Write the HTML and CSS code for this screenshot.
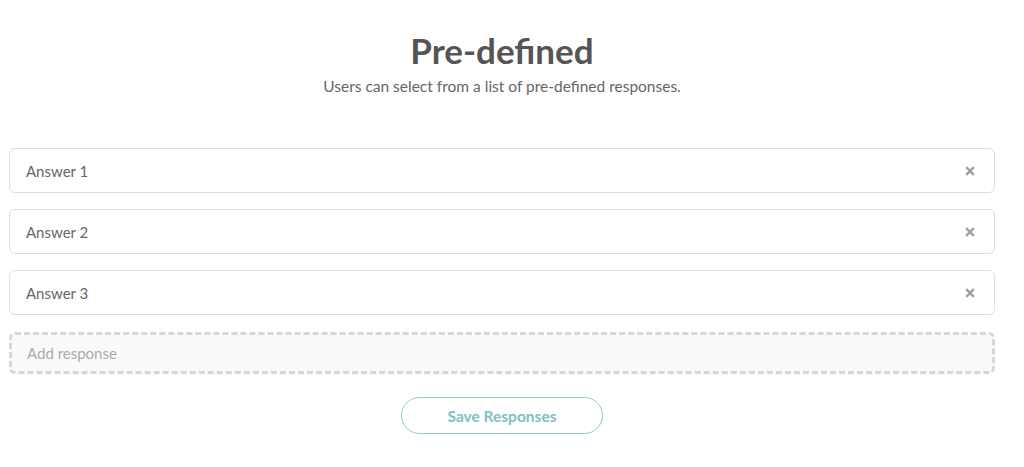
FILE: index.html
```html
<!DOCTYPE html>
<html>
<head>
<meta charset="utf-8">
<link rel="stylesheet" href="styles.css">
</head>
<body>
<div class="page">
  <header class="head">
    <h1 class="title">Pre-defined</h1>
    <p class="sub">Users can select from a list of pre-defined responses.</p>
  </header>
  <div class="list">
    <div class="row"><span class="label">Answer 1</span><svg class="x" viewBox="0 0 10 10" width="10" height="10"><path d="M1.2 1.2L8.8 8.8M8.8 1.2L1.2 8.8"/></svg></div>
    <div class="row"><span class="label">Answer 2</span><svg class="x" viewBox="0 0 10 10" width="10" height="10"><path d="M1.2 1.2L8.8 8.8M8.8 1.2L1.2 8.8"/></svg></div>
    <div class="row"><span class="label">Answer 3</span><svg class="x" viewBox="0 0 10 10" width="10" height="10"><path d="M1.2 1.2L8.8 8.8M8.8 1.2L1.2 8.8"/></svg></div>
    <div class="add">Add response</div>
  </div>
  <div class="actions"><button class="save">Save Responses</button></div>
</div>
</body>
</html>
```
FILE: styles.css
```css
html, body { margin: 0; padding: 0; background: #fff; }
body { font-family: Lato, "Noto Sans", sans-serif; color: #555; }
.page { width: 986px; margin-left: 9px; padding-top: 28px; }
.head { text-align: center; }
.title { margin: 0; font-size: 35px; font-weight: 700; color: #555; line-height: 44px; }
.sub { margin: 4px 0 0; font-size: 15.5px; color: #666; line-height: 20px; }
.list { margin-top: 52px; display: flex; flex-direction: column; gap: 16px; }
.row { box-sizing: border-box; height: 45px; border: 1px solid #dedede; border-radius: 6px; display: flex; align-items: center; justify-content: space-between; padding: 0 19px 0 16px; font-size: 15px; color: #666; }
.x { stroke: #a0a0a0; stroke-width: 2.4; fill: none; }
.add { height: 42px; box-sizing: border-box; border: 3px dashed #d6d6d6; border-radius: 6px; background: #fafafa; display: flex; align-items: center; padding-left: 15px; margin-top: 1px; font-size: 15px; color: #aaa; }
.actions { display: flex; justify-content: center; margin-top: 23px; }
.save { width: 202px; height: 37px; border: 1px solid #8ccbd0; border-radius: 19px; background: #fff; color: #7cc0c6; font-family: Lato, sans-serif; font-size: 15.5px; font-weight: 700; }
```
